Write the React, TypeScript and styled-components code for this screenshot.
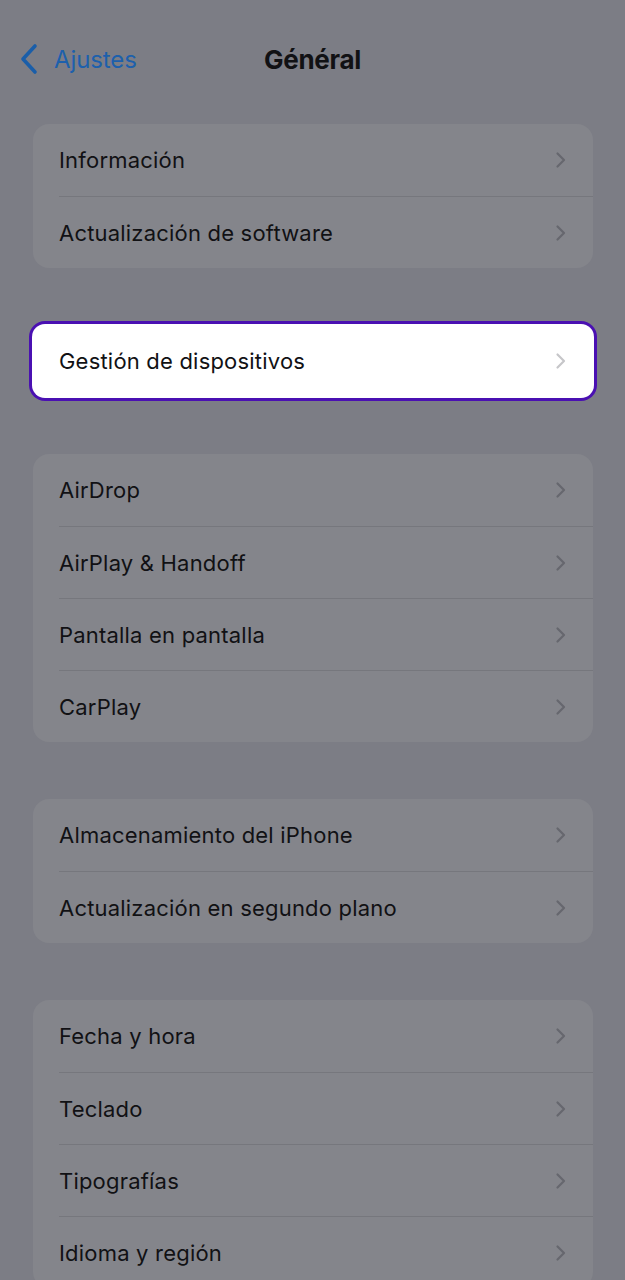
import React from 'react';
import styled, { createGlobalStyle } from 'styled-components';

const GlobalStyle = createGlobalStyle`
  html, body {
    margin: 0;
    padding: 0;
    background: #7c7d85;
    font-family: Inter, "Noto Sans", "Liberation Sans", sans-serif;
  }
`;

type Row = { label: string };

const groups: Row[][] = [
    [{ label: 'Información' }, { label: 'Actualización de software' }],
    [{ label: 'Gestión de dispositivos' }],
    [{ label: 'AirDrop' }, { label: 'AirPlay & Handoff' }, { label: 'Pantalla en pantalla' }, { label: 'CarPlay' }],
    [{ label: 'Almacenamiento del iPhone' }, { label: 'Actualización en segundo plano' }],
    [{ label: 'Fecha y hora' }, { label: 'Teclado' }, { label: 'Tipografías' }, { label: 'Idioma y región' }],
];

const Chevron = ({ light }: { light?: boolean }) => (
    <ChevronSvg width="12" height="18" viewBox="0 0 12 18" fill="none">
        <path d="M2.5 2.5 L9 9 L2.5 15.5" stroke={light ? '#c6c6c9' : '#66676e'} strokeWidth="2.2" strokeLinecap="round" strokeLinejoin="round" />
    </ChevronSvg>
);

export default function App() {
    return (
        <Screen>
            <GlobalStyle />
            <NavBar>
                <BackButton>
                    <svg width="22" height="32" viewBox="0 0 22 32" fill="none">
                        <path d="M17 3 L5 16 L17 29" stroke="#1a5ea9" strokeWidth="3.6" strokeLinecap="round" strokeLinejoin="round" />
                    </svg>
                    <BackLabel>Ajustes</BackLabel>
                </BackButton>
                <Title>Général</Title>
            </NavBar>
            <List>
                {groups.map((rows, gi) => {
                    const focused = gi === 1;
                    return (
                        <Card key={gi} $focused={focused}>
                            {rows.map((row, ri) => (
                                <Item key={row.label} $first={ri === 0}>
                                    <Label>{row.label}</Label>
                                    <Chevron light={focused} />
                                </Item>
                            ))}
                        </Card>
                    );
                })}
            </List>
        </Screen>
    );
}

const Screen = styled.div`
    width: 625px;
    height: 1280px;
    overflow: hidden;
    background: #7c7d85;
`;

const NavBar = styled.div`
    position: relative;
    height: 118px;
    display: flex;
    align-items: flex-start;
    justify-content: center;
    padding-top: 43px;
    box-sizing: border-box;
`;

const BackButton = styled.div`
    position: absolute;
    left: 18px;
    top: 43px;
    display: flex;
    align-items: center;
    gap: 14px;
`;

const BackLabel = styled.span`
    color: #1d60ac;
    font-size: 24px;
    letter-spacing: -0.1px;
`;

const Title = styled.div`
    color: #111114;
    font-size: 26px;
    font-weight: 700;
    line-height: 34px;
    letter-spacing: -0.3px;
`;

const List = styled.div`
    display: flex;
    flex-direction: column;
    gap: 57px;
    padding: 6px 32px 0 33px;
`;

const Card = styled.div<{ $focused?: boolean }>`
    background: ${p => (p.$focused ? '#ffffff' : '#84858b')};
    border-radius: ${p => (p.$focused ? '12px' : '16px')};
    padding-left: 26px;
    box-shadow: ${p => (p.$focused ? '0 0 0 1px #ffffff, 0 0 0 4px #4a10b2' : 'none')};
`;

const Item = styled.div<{ $first?: boolean }>`
    height: 72px;
    display: flex;
    align-items: center;
    justify-content: space-between;
    padding-right: 26px;
    border-top: ${p => (p.$first ? 'none' : '1.5px solid #76777d')};
    box-sizing: border-box;
`;

const Label = styled.span`
    color: #111114;
    font-size: 22px;
    letter-spacing: 0.2px;
`;

const ChevronSvg = styled.svg`
    flex-shrink: 0;
`;
